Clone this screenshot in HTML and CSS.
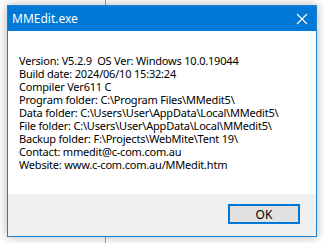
FILE: index.html
```html
<!DOCTYPE html>
<html>
<head>
  <title>MMEdit.exe</title>
  <link rel="stylesheet" href="styles.css">
</head>
<body>
  <div class="dialog">
    <div class="title-bar">
      <span class="title">MMEdit.exe</span>
      <svg class="close" width="12" height="12" viewBox="0 0 12 12">
        <path d="M1 1 L11 11 M11 1 L1 11" stroke="#fff" stroke-width="1.1" fill="none" />
      </svg>
    </div>

    <div class="content">
      <p>Version: V5.2.9&nbsp; OS Ver: Windows 10.0.19044</p>
      <p>Build date: 2024/06/10 15:32:24</p>
      <p>Compiler Ver611 C</p>
      <p>Program folder: C:\Program Files\MMedit5\</p>
      <p>Data folder: C:\Users\User\AppData\Local\MMedit5\</p>
      <p>File folder: C:\Users\User\AppData\Local\MMedit5\</p>
      <p>Backup folder: F:\Projects\WebMite\Tent 19\</p>
      <p>Contact: mmedit@c-com.com.au</p>
      <p>Website: www.c-com.com.au/MMedit.htm</p>
    </div>

    <div class="footer">
      <button class="ok-btn">OK</button>
    </div>
  </div>
</body>
</html>
```

FILE: styles.css
```css
* {
  margin: 0;
  padding: 0;
  box-sizing: border-box;
}

body {
  width: 324px;
  height: 243px;
  overflow: hidden;
  font-family: 'Noto Sans', sans-serif;
  background-color: #fff;
  background-image: linear-gradient(to right, transparent 105px, #a0a0a0 105px, #a0a0a0 106px, transparent 106px);
  padding: 5px 0 0 7px;
}

.dialog {
  width: 310px;
  height: 232px;
  border: 1px solid #1883d7;
  background-color: #f0f0f0;
  box-shadow: 0 0 10px rgba(0, 0, 0, 0.3);
  display: flex;
  flex-direction: column;
}

.title-bar {
  height: 25px;
  background-color: #0078d7;
  color: #fff;
  display: flex;
  align-items: center;
  justify-content: space-between;
  padding: 0 8px 0 4px;
  font-size: 12px;
}

.content {
  height: 163px;
  background-color: #fff;
  padding: 23px 0 0 11px;
  font-size: 11px;
  letter-spacing: -0.2px;
  line-height: 13px;
  color: #000;
}

.footer {
  flex: 1;
  display: flex;
  justify-content: flex-end;
  padding: 10px 16px 0 0;
}

.ok-btn {
  width: 72px;
  height: 20px;
  font-family: 'Noto Sans', sans-serif;
  font-size: 12px;
  color: #000;
  background-color: #e1e1e1;
  border: 2px solid #0078d7;
}
```
